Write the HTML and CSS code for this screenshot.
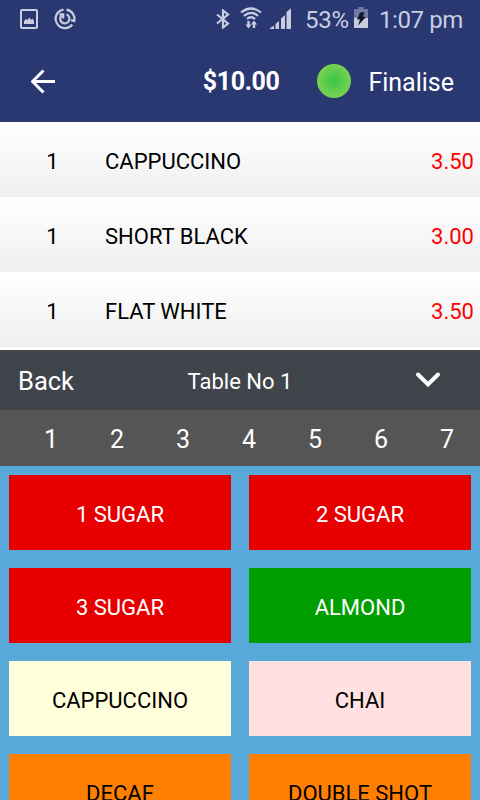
FILE: index.html
```html
<!DOCTYPE html>
<html lang="en">
<head>
    <meta charset="UTF-8">
    <meta name="viewport" content="width=device-width, initial-scale=1.0">
    <title>Table Order</title>
    <link rel="stylesheet" href="styles.css">
</head>
<body>
    <div class="status-bar">
        <svg class="icon-picture" width="18" height="20" viewBox="0 0 18 20">
            <rect x="1" y="1" width="16" height="18" rx="1" fill="none" stroke="currentColor" stroke-width="2"/>
            <path d="M4 15v-3l2-2 1.500 1 2-2.500 1.500 2.500 1.500-1.500 1.500 2.500v3z" fill="currentColor"/>
        </svg>
        <svg class="icon-sync" width="22" height="22" viewBox="0 0 22 22" fill="none" stroke="currentColor" stroke-width="2.200">
            <path d="M9.500 1.600A9.300 9.300 0 1 0 18.300 16.500"/>
            <path d="M12.500 1.700A9.300 9.300 0 0 1 20.200 13l-3.200-1"/>
            <path d="M12.500 6.500A4.600 4.600 0 1 1 7.500 7.600M5.500 6.300h3.700v4.200"/>
        </svg>
        <svg class="icon-bluetooth" width="14" height="20" viewBox="0 0 14 20">
            <path d="M1 5.500l11 9L7 18.500v-17l5 4-11 9" fill="none" stroke="currentColor" stroke-width="2.200"/>
        </svg>
        <svg class="icon-wifi" width="22" height="22" viewBox="0 0 22 22" fill="none" stroke="currentColor">
            <path d="M1 5.500Q11-2.500 21 5.500M4 8.800Q11 3 18 8.800M7 12Q11 8.500 15 12" stroke-width="2.200"/>
            <path d="M8.500 14v6M14 21v-6" stroke-width="2.400"/>
            <path d="M5.500 17.500h6l-3 4zM11 17.500h6l-3-4z" fill="currentColor" stroke="none"/>
        </svg>
        <svg class="icon-signal" width="22" height="22" viewBox="0 0 22 22" fill="currentColor">
            <path d="M0 21v-.800l4-2.700V21zM5.500 21v-5l3.500-3v8zM11 21V10.500l4-3.500v14zM16.500 21V4L21 .300V21z"/>
        </svg>
        <span class="battery-level">53%</span>
        <svg class="icon-battery" width="14" height="21" viewBox="0 0 14 21">
            <path d="M4.500 0h5v2H14v9H0V2h4.500z" fill="#717aa6"/>
            <path d="M0 11h14v10H0z" fill="#c9cde0"/>
            <path d="M6 5.500l4.500-.5-1.500 4.500 3 .5-8 8.500 2-6H3z" fill="#15182b"/>
        </svg>
        <span class="clock">1:07 pm</span>
    </div>

    <div class="app-bar">
        <svg class="icon-arrow" width="25" height="25" viewBox="0 0 25 25" fill="none" stroke="#fff" stroke-width="3">
            <path d="M24 12.500H3M12.500 1.500l-11 11 11 11"/>
        </svg>
        <span class="total">$10.00</span>
        <span class="online"></span>
        <span class="finalise">Finalise</span>
    </div>

    <div class="order-list">
        <div class="order-row">
            <span class="qty">1</span>
            <span class="item">CAPPUCCINO</span>
            <span class="price">3.50</span>
        </div>
        <div class="order-row">
            <span class="qty">1</span>
            <span class="item">SHORT BLACK</span>
            <span class="price">3.00</span>
        </div>
        <div class="order-row">
            <span class="qty">1</span>
            <span class="item">FLAT WHITE</span>
            <span class="price">3.50</span>
        </div>
    </div>

    <div class="table-bar">
        <span class="back">Back</span>
        <span class="table-name">Table No 1</span>
        <svg class="icon-chevron" width="26" height="18" viewBox="0 0 26 18" fill="none" stroke="#fff" stroke-width="4" stroke-linecap="round">
            <path d="M3 3.500l10 10L23 3.500"/>
        </svg>
    </div>

    <div class="number-bar">
        <span>1</span>
        <span>2</span>
        <span>3</span>
        <span>4</span>
        <span>5</span>
        <span>6</span>
        <span>7</span>
    </div>

    <div class="menu-grid">
        <div class="menu-btn red">1 SUGAR</div>
        <div class="menu-btn red">2 SUGAR</div>
        <div class="menu-btn red">3 SUGAR</div>
        <div class="menu-btn green">ALMOND</div>
        <div class="menu-btn cream">CAPPUCCINO</div>
        <div class="menu-btn pink">CHAI</div>
        <div class="menu-btn orange">DECAF</div>
        <div class="menu-btn orange">DOUBLE SHOT</div>
    </div>
</body>
</html>
```
FILE: styles.css
```css
* {
  box-sizing: border-box;
}

body {
  margin: 0;
  width: 480px;
  height: 800px;
  overflow: hidden;
  display: flex;
  flex-direction: column;
  font-family: Roboto, "Liberation Sans", sans-serif;
  font-size: 22px;
  color: #000;
  background-color: #56a9d8;
}

svg {
  display: block;
  flex: none;
}

/* Status bar */
.status-bar {
  flex: none;
  display: flex;
  align-items: flex-start;
  height: 40px;
  padding: 8px 17px 0 20px;
  background-color: #2a3872;
  color: #c9cde0;
  font-size: 24px;
  line-height: 24px;
  white-space: nowrap;
}

.icon-picture {
  margin-top: 1px;
}

.icon-sync {
  margin-left: 16px;
}

.icon-bluetooth {
  margin: 1px 0 0 140px;
}

.icon-wifi {
  margin: -1px 0 0 10px;
}

.icon-signal {
  margin-left: 8px;
}

.battery-level {
  margin-left: 13px;
  width: 44px;
  letter-spacing: -0.3px;
}

.icon-battery {
  margin-left: 5px;
  margin-top: -1px;
}

.clock {
  margin-left: auto;
  letter-spacing: -0.4px;
}

/* App bar */
.app-bar {
  flex: none;
  display: flex;
  align-items: center;
  height: 82px;
  padding: 0 26px 0 31px;
  background-color: #2a3872;
  color: #fff;
  font-size: 25px;
}

.total {
  margin-left: auto;
  font-weight: bold;
  letter-spacing: -0.4px;
}

.online {
  width: 34px;
  height: 34px;
  margin: 0 17px 0 38px;
  border-radius: 50%;
  background: radial-gradient(circle closest-side, #38c648, #7ad151);
}

.finalise {
  padding-top: 3px;
}

/* Order list */
.order-list {
  flex: none;
  padding-bottom: 3px;
  background-color: #fff;
}

.order-row {
  display: flex;
  align-items: center;
  height: 75px;
  padding: 3px 6px 0 0;
  background: linear-gradient(#fff, #efefef);
}

.qty {
  width: 105px;
  text-align: center;
}

.item {
  flex: 1;
}

.price {
  color: #f00;
}

/* Table bar */
.table-bar {
  flex: none;
  display: grid;
  grid-template-columns: 1fr auto 1fr;
  align-items: center;
  height: 60px;
  padding: 2px 18px 0;
  background-color: #40444b;
  color: #fff;
}

.back {
  font-size: 25.5px;
}

.table-name {
  padding-top: 1px;
}

.icon-chevron {
  justify-self: end;
  margin: 0 21px 2px 0;
}

/* Number bar */
.number-bar {
  flex: none;
  display: flex;
  align-items: center;
  height: 56px;
  padding: 2px 0 0 18px;
  background-color: #555;
  color: #fff;
  font-size: 25px;
}

.number-bar span {
  flex: 0 0 66px;
  text-align: center;
}

/* Menu buttons */
.menu-grid {
  display: grid;
  grid-template-columns: 1fr 1fr;
  grid-auto-rows: 75px;
  gap: 18px;
  padding: 9px;
}

.menu-btn {
  display: flex;
  align-items: center;
  justify-content: center;
  padding-top: 3px;
}

.red {
  background-color: #e80000;
  color: #fff;
}

.green {
  background-color: #009e00;
  color: #fff;
}

.cream {
  background-color: #ffffdc;
}

.pink {
  background-color: #ffe1e1;
}

.orange {
  background-color: #ff8000;
}
```
